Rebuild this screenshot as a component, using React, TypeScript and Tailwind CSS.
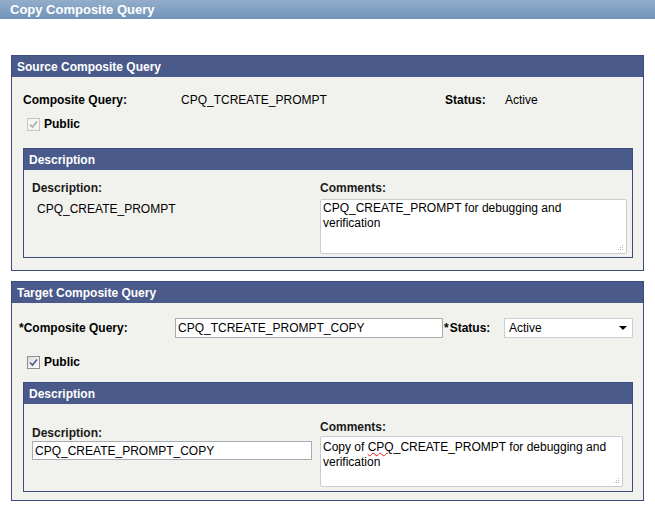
import React from "react";

const font = { fontFamily: '"Liberation Sans", Arial, sans-serif' };

function Check({ disabled }: { disabled?: boolean }) {
  return (
    <span
      className={`flex h-[13px] w-[13px] items-center justify-center border ${
        disabled
          ? "border-[#c6c6c6] bg-[#f4f4f4]"
          : "border-[#8e8f8f] bg-gradient-to-br from-[#dcdcdc] to-white"
      }`}
    >
      <svg width="11" height="11" viewBox="0 0 11 11">
        <path
          d="M2 5.5 L4.5 8 L9 2.5"
          fill="none"
          stroke={disabled ? "#a9a9a9" : "#4a5b8c"}
          strokeWidth="1.6"
        />
      </svg>
    </span>
  );
}

function Grip() {
  return (
    <svg width="7" height="7" viewBox="0 0 7 7" className="absolute bottom-[2px] right-[2px]">
      <rect x="5" y="1" width="1" height="1" fill="#b5b5b5" />
      <rect x="3" y="3" width="1" height="1" fill="#b5b5b5" />
      <rect x="5" y="3" width="1" height="1" fill="#b5b5b5" />
      <rect x="1" y="5" width="1" height="1" fill="#b5b5b5" />
      <rect x="3" y="5" width="1" height="1" fill="#b5b5b5" />
      <rect x="5" y="5" width="1" height="1" fill="#b5b5b5" />
    </svg>
  );
}

function Header({ title }: { title: string }) {
  return (
    <div className="flex h-[21px] items-center bg-[#4a5a8b] pl-[5px] text-[12px] font-bold text-white">
      {title}
    </div>
  );
}

function Comments({ width, height, pt, children }: { width: string; height: string; pt: string; children: React.ReactNode }) {
  return (
    <div
      className={`relative ${width} ${height} ${pt} rounded-[2px] border border-[#c9ccd1] bg-white pl-[2px] text-[12px] leading-[15px] text-black`}
    >
      {children}
      <Grip />
    </div>
  );
}

export default function App() {
  return (
    <div className="min-h-[506px] w-[655px] bg-white text-black" style={font}>
      <div className="flex h-[19px] items-center bg-gradient-to-b from-[#93aecb] to-[#7192b8] pl-[10px] text-[13px] font-bold text-white">
        Copy Composite Query
      </div>

      {/* Source */}
      <div className="ml-[11px] mt-[36px] w-[633px] border border-[#3d4b7f] bg-[#f1f2ee]">
        <Header title="Source Composite Query" />
        <div className="pb-[12px] pt-[13px]">
          <div className="flex h-[20px] items-center pl-[11px] text-[12px]">
            <span className="w-[158px] font-bold">Composite Query:</span>
            <span className="w-[264px]">CPQ_TCREATE_PROMPT</span>
            <span className="w-[60px] font-bold">Status:</span>
            <span>Active</span>
          </div>
          <div className="mt-[4px] flex h-[20px] items-center gap-[4px] pl-[15px] text-[12px] font-bold">
            <Check disabled />
            <span>Public</span>
          </div>
          <div className="ml-[11px] mt-[14px] w-[610px] border border-[#3d4b7f]">
            <Header title="Description" />
            <div className="grid grid-cols-[288px_1fr] pb-[3px] pl-[8px] pr-[5px] pt-[11px] text-[12px]">
              <div>
                <div className="h-[14px] font-bold leading-[14px] text-[#1a1a1a]">Description:</div>
                <div className="mt-[7px] h-[14px] pl-[5px] leading-[14px]">CPQ_CREATE_PROMPT</div>
              </div>
              <div>
                <div className="h-[14px] font-bold leading-[14px] text-[#1a1a1a]">Comments:</div>
                <div className="mt-[4px]">
                  <Comments width="w-[307px]" height="h-[55px]" pt="pt-[1px]">
                    CPQ_CREATE_PROMPT for debugging and
                    <br />
                    verification
                  </Comments>
                </div>
              </div>
            </div>
          </div>
        </div>
      </div>

      {/* Target */}
      <div className="ml-[11px] mt-[10px] w-[633px] border border-[#3d4b7f] bg-[#f1f2ee]">
        <Header title="Target Composite Query" />
        <div className="pb-[8px] pt-[15px]">
          <div className="flex h-[20px] items-center pl-[7px] text-[12px]">
            <span className="w-[156px] font-bold">*Composite Query:</span>
            <div className="flex h-[20px] w-[268px] items-center border border-[#a7acb3] bg-white pl-[2px]">
              CPQ_TCREATE_PROMPT_COPY
            </div>
            <span className="w-[61px] pl-[1px] font-bold">
              *<span className="ml-[1px]">Status:</span>
            </span>
            <div className="flex h-[20px] w-[129px] items-center justify-between border border-[#cdd0d4] bg-white pl-[4px] pr-[5px]">
              <span>Active</span>
              <svg width="8" height="4" viewBox="0 0 8 4">
                <path d="M0 0 L8 0 L4 4 Z" fill="#000" />
              </svg>
            </div>
          </div>
          <div className="mt-[14px] flex h-[20px] items-center gap-[4px] pl-[15px] text-[12px] font-bold">
            <Check />
            <span>Public</span>
          </div>
          <div className="ml-[11px] mt-[10px] w-[610px] border border-[#3d4b7f]">
            <Header title="Description" />
            <div className="grid grid-cols-[288px_1fr] pb-[4px] pl-[8px] pr-[5px] pt-[16px] text-[12px]">
              <div className="pt-[6px]">
                <div className="h-[14px] font-bold leading-[14px] text-[#1a1a1a]">Description:</div>
                <div className="mt-[1px] flex h-[19px] w-[280px] items-center border border-[#a7acb3] bg-white pl-[2px]">
                  CPQ_CREATE_PROMPT_COPY
                </div>
              </div>
              <div>
                <div className="h-[14px] font-bold leading-[14px] text-[#1a1a1a]">Comments:</div>
                <div className="mt-[2px]">
                  <Comments width="w-[303px]" height="h-[51px]" pt="pt-[3px]">
                    Copy of{" "}
                    <span className="underline decoration-[#e0201a] decoration-wavy decoration-1 underline-offset-[1px]">
                      CPQ
                    </span>
                    _CREATE_PROMPT for debugging and
                    <br />
                    verification
                  </Comments>
                </div>
              </div>
            </div>
          </div>
        </div>
      </div>
    </div>
  );
}
